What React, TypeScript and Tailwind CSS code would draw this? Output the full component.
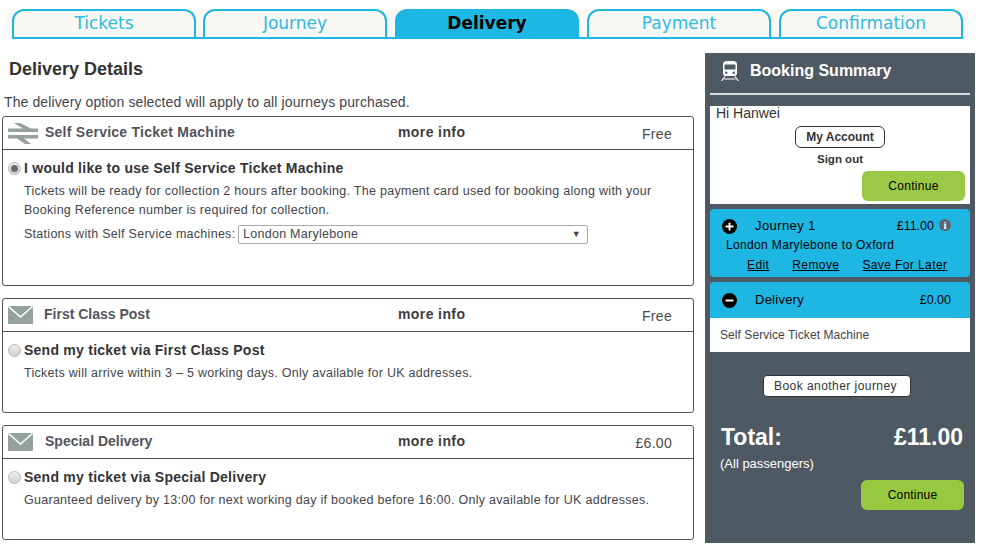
import { Plus, Minus } from "lucide-react";

const tabs = ["Tickets", "Journey", "Delivery", "Payment", "Confirmation"];

function RailIcon() {
  return (
    <svg width="30" height="21" viewBox="0 0 30 21" fill="#95a19c">
      <path d="M6 0h6L23 5.500h7V9H0V5.500h15z" />
      <path d="M0 12h30v3.500H16L23 21h-6L9 15.500H0z" />
    </svg>
  );
}

function MailIcon() {
  return (
    <svg width="25" height="18" viewBox="0 0 25 18">
      <rect width="25" height="18" rx="1" fill="#95a19c" />
      <path d="M0.500 0.500L12.500 11L24.500 0.500" fill="none" stroke="#fff" strokeWidth="1.500" />
    </svg>
  );
}

function TrainIcon() {
  return (
    <svg width="18" height="20" viewBox="0 0 18 20" fill="#fff">
      <path d="M6 0h6c2.500 0 4 1.500 4 3.500V12c0 2-1 3-3 3H5c-2 0-3-1-3-3V3.500C2 1.500 3.500 0 6 0z" />
      <rect x="3.500" y="3.500" width="11" height="5" rx="0.500" fill="#4f5964" />
      <circle cx="5.200" cy="11.800" r="1.200" fill="#4f5964" />
      <circle cx="12.800" cy="11.800" r="1.200" fill="#4f5964" />
      <path d="M4 15.500L0.500 20M14 15.500l3.500 4.500M3.500 18h11" stroke="#fff" strokeWidth="1.200" fill="none" />
    </svg>
  );
}

function Radio({ checked }: { checked?: boolean }) {
  return (
    <span className="flex h-[13px] w-[13px] shrink-0 items-center justify-center rounded-full border border-[#b4b4b4] bg-gradient-to-b from-[#eeeeee] to-[#d2d2d2]">
      {checked && <span className="h-[7px] w-[7px] rounded-full bg-[#6b6b6b]" />}
    </span>
  );
}

function OptionCard({
  icon,
  titleClass,
  title,
  price,
  heading,
  children,
  bodyHeight,
  checked,
}: {
  icon: React.ReactNode;
  titleClass: string;
  title: string;
  price: string;
  heading: string;
  children: React.ReactNode;
  bodyHeight: string;
  checked?: boolean;
}) {
  return (
    <div className="rounded-[3px] border border-[#595055]">
      <div className="flex h-[33px] items-center border-b border-[#595055]">
        <div className="flex w-[36px] shrink-0 justify-start pl-[5px]">{icon}</div>
        <div className={`-mt-[2px] w-[359px] text-[14px] font-bold text-[#54545c] ${titleClass}`}>{title}</div>
        <div className="-mt-[2px] text-[14px] font-bold tracking-[0.4px] text-[#3c3c41]">more info</div>
        <div className="ml-auto pr-[21px] pt-[2px] text-[14px] tracking-[0.3px] text-[#4a4a4a]">{price}</div>
      </div>
      <div className={`px-[5px] pt-[10px] ${bodyHeight}`}>
        <div className="flex h-[16px] items-center gap-[3px] text-[14px] font-bold tracking-[0.25px] text-[#333338]">
          <Radio checked={checked} />
          {heading}
        </div>
        <div className="mt-[6px] pl-[16px] text-[12.500px] leading-[19px] tracking-[0.275px] text-[#44444a]">{children}</div>
      </div>
    </div>
  );
}

export default function App() {
  return (
    <div className="h-[550px] w-[983px] overflow-hidden bg-white font-['Liberation_Sans',Arial,sans-serif]">
      <div className="ml-[7px] mt-[9px] h-[30px] w-[961px] bg-[#f9f8f4] px-[5px]">
        <div className="flex h-[30px] w-[951px] gap-[8px] border-b-2 border-[#1eb6e2]">
          {tabs.map((t, i) =>
            t === "Delivery" ? (
              <div
                key={t}
                className="flex h-[28px] w-[184px] items-center justify-center rounded-t-[12px] bg-[#1eb6e2] pt-[2px] font-['DejaVu_Sans',sans-serif] text-[17px] font-bold text-black"
              >
                {t}
              </div>
            ) : (
              <div
                key={t}
                className={`flex h-[28px] w-[184px] items-center justify-center rounded-t-[12px] border-x-2 border-t-2 border-[#1eb6e2] bg-[#f9f8f4] font-['DejaVu_Sans',sans-serif] text-[17px] text-[#2dbbe4] ${i === 0 ? "-mr-[1px]" : ""}`}
              >
                {t}
              </div>
            )
          )}
        </div>
      </div>

      <div className="flex items-start">
        <div className="ml-[2px] w-[692px]">
          <h1 className="ml-[7px] mt-[20px] text-[18px] font-bold leading-[21px] text-[#333333]">Delivery Details</h1>
          <p className="ml-[2px] mt-[13px] text-[14px] leading-[18px] tracking-[0.11px] text-[#44444a]">
            The delivery option selected will apply to all journeys purchased.
          </p>
          <div className="mt-[5px] flex flex-col gap-[12px]">
            <OptionCard
              icon={<RailIcon />}
              titleClass="pl-[6px] tracking-[0.25px]"
              title="Self Service Ticket Machine"
              price="Free"
              heading="I would like to use Self Service Ticket Machine"
              bodyHeight="h-[135px]"
              checked
            >
              <p>
                Tickets will be ready for collection 2 hours after booking. The payment card used for booking along with your
                <br />
                Booking Reference number is required for collection.
              </p>
              <div className="mt-[5px] flex items-center">
                <span className="w-[214px] shrink-0">Stations with Self Service machines:</span>
                <div className="flex h-[19px] w-[350px] items-center justify-between rounded-[2px] border border-[#a9a9a9] pl-[4px] pr-[6px] text-[12.500px]">
                  London Marylebone
                  <span className="text-[9px] text-[#444]">▼</span>
                </div>
              </div>
            </OptionCard>
            <OptionCard
              icon={<MailIcon />}
              titleClass="pl-[5px]"
              title="First Class Post"
              price="Free"
              heading="Send my ticket via First Class Post"
              bodyHeight="h-[80px]"
            >
              Tickets will arrive within 3 – 5 working days. Only available for UK addresses.
            </OptionCard>
            <OptionCard
              icon={<MailIcon />}
              titleClass="pl-[6px]"
              title="Special Delivery"
              price="£6.00"
              heading="Send my ticket via Special Delivery"
              bodyHeight="h-[80px]"
            >
              Guaranteed delivery by 13:00 for next working day if booked before 16:00. Only available for UK addresses.
            </OptionCard>
          </div>
        </div>

        <aside className="ml-[11px] mt-[14px] h-[490px] w-[270px] bg-[#4f5964] px-[5px]">
          <div className="flex h-[42px] items-center border-b-2 border-[#d9dbdd] pb-[5px] pl-[11px]">
            <TrainIcon />
            <span className="ml-[11px] text-[16px] font-bold text-white">Booking Summary</span>
          </div>
          <div className="mt-[11px] h-[98px] bg-white text-[#333]">
            <div className="pl-[6px] text-[14px] leading-[15px]">Hi Hanwei</div>
            <div className="mx-auto mt-[5px] flex h-[22px] w-[90px] items-center justify-center rounded-[6px] border border-[#333] text-[12px] font-bold">
              My Account
            </div>
            <div className="mt-[4px] text-center text-[11.500px] font-bold leading-[14px]">Sign out</div>
            <div className="ml-auto mr-[5px] mt-[5px] flex h-[30px] w-[103px] items-center justify-center rounded-[6px] bg-[#9aca45] text-[12px] tracking-[0.3px] text-black">
              Continue
            </div>
          </div>
          <div className="mt-[5px] h-[68px] rounded-[4px] bg-[#1eb6e2] text-black">
            <div className="flex h-[27px] items-center pl-[12px] pr-[19px] pt-[7px] text-[13px]">
              <span className="flex h-[15px] w-[15px] items-center justify-center rounded-full bg-black">
                <Plus size={11} strokeWidth={4} color="#fff" />
              </span>
              <span className="ml-[18px] tracking-[0.4px]">Journey 1</span>
              <span className="ml-auto text-[12.500px]">£11.00</span>
              <span className="-mt-[2px] ml-[5px] flex h-[12px] w-[12px] items-center justify-center rounded-full bg-[#5c6674] font-['Liberation_Serif',serif] text-[11px] font-bold leading-none text-white">
                i
              </span>
            </div>
            <div className="mt-[1px] pl-[16px] text-[12px] leading-[17px] tracking-[0.35px]">London Marylebone to Oxford</div>
            <div className="mt-[3px] flex text-[12px] leading-[17px] tracking-[0.4px] underline">
              <span className="ml-[37px]">Edit</span>
              <span className="ml-[23px]">Remove</span>
              <span className="ml-[23px]">Save For Later</span>
            </div>
          </div>
          <div className="mt-[5px] flex h-[36px] items-center rounded-t-[4px] bg-[#1eb6e2] pl-[12px] pr-[19px] text-[13px] text-black">
            <span className="flex h-[15px] w-[15px] items-center justify-center rounded-full bg-black">
              <Minus size={11} strokeWidth={4} color="#fff" />
            </span>
            <span className="ml-[18px] tracking-[0.25px]">Delivery</span>
            <span className="ml-auto text-[12.500px]">£0.00</span>
          </div>
          <div className="flex h-[34px] items-center bg-white pl-[10px] text-[12px] tracking-[0.07px] text-[#44444a]">Self Service Ticket Machine</div>
          <div className="ml-[53px] mt-[23px] flex h-[22px] w-[148px] items-center justify-center rounded-[4px] border border-[#333] bg-white pr-[3px] text-[12px] tracking-[0.45px] text-[#333]">
            Book another journey
          </div>
          <div className="mt-[27px] flex items-center justify-between pl-[11px] pr-[7px] text-[23px] font-bold leading-[27px] text-white">
            <span>Total:</span>
            <span>£11.00</span>
          </div>
          <div className="ml-[10px] mt-[6px] text-[13px] leading-[14px] text-white">(All passengers)</div>
          <div className="ml-auto mr-[6px] mt-[9px] flex h-[30px] w-[103px] items-center justify-center rounded-[6px] bg-[#96c93f] text-[12px] tracking-[0.2px] text-black">
            Continue
          </div>
        </aside>
      </div>
    </div>
  );
}
